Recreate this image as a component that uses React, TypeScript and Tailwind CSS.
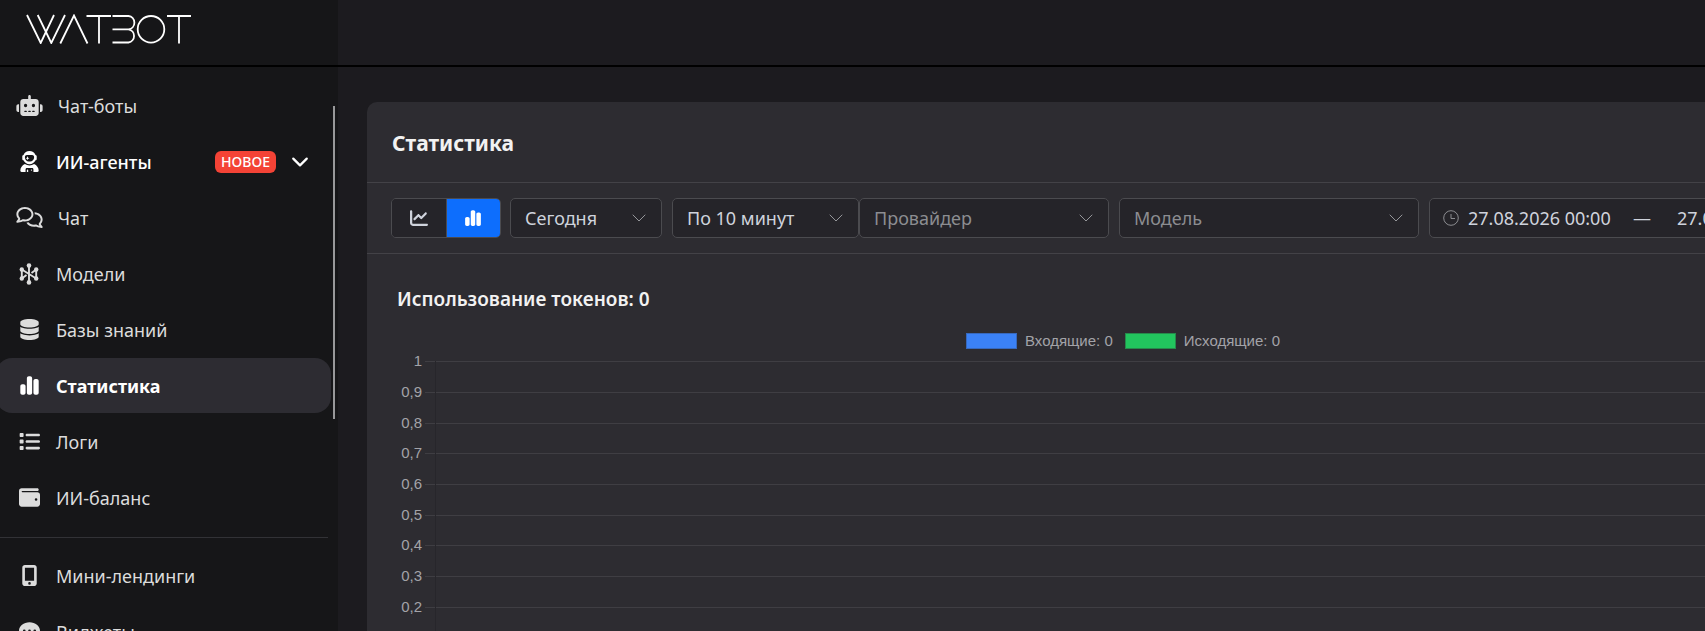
import { useState } from "react";
import type { ReactNode } from "react";
import {
    FaChartLine,
    FaChartSimple,
    FaCommentDots,
    FaDatabase,
    FaList,
    FaMobileScreenButton,
    FaRegComments,
    FaRobot,
    FaUserAstronaut,
    FaWallet,
} from "react-icons/fa6";

interface NavItem {
    id: string;
    label: string;
    icon: ReactNode;
    badge?: string;
}

const MAIN_NAV: NavItem[] = [
    { id: "bots", label: "Чат-боты", icon: <FaRobot className="-ml-px h-[21px] w-[27px]" /> },
    { id: "agents", label: "ИИ-агенты", icon: <FaUserAstronaut className="size-[21px]" />, badge: "НОВОЕ" },
    { id: "chat", label: "Чат", icon: <FaRegComments className="-ml-px h-[21px] w-[27px]" /> },
    { id: "models", label: "Модели", icon: <ModelsIcon /> },
    { id: "knowledge", label: "Базы знаний", icon: <FaDatabase className="size-[21px]" /> },
    { id: "stats", label: "Статистика", icon: <FaChartSimple className="size-[21px]" /> },
    { id: "logs", label: "Логи", icon: <FaList className="size-[21px]" /> },
    { id: "balance", label: "ИИ-баланс", icon: <FaWallet className="size-[21px]" /> },
];

const EXTRA_NAV: NavItem[] = [
    { id: "landings", label: "Мини-лендинги", icon: <FaMobileScreenButton className="size-[21px]" /> },
    { id: "widgets", label: "Виджеты", icon: <FaCommentDots className="size-[21px]" /> },
];

const TICKS = ["1", "0,9", "0,8", "0,7", "0,6", "0,5", "0,4", "0,3", "0,2", "0,1", "0"];

const LEGEND = [
    { label: "Входящие: 0", color: "bg-[#3b82f6] border-[#3769bd]" },
    { label: "Исходящие: 0", color: "bg-[#22c55e] border-[#268a4b]" },
];

function Logo() {
    return (
        <svg viewBox="0 0 166 30" className="h-[30px] w-[166px]" fill="none" stroke="#fff" strokeWidth="1.8" role="img" aria-label="WATBOT">
            <path d="M1 1 14.7 29 28 1M11.7 1 25.3 29 39 1" />
            <path d="M34.3 29.5 48 1.5 61.5 29.5" />
            <path d="M60.5 2H85M73 2V29.5" />
            <path d="M86.5 2H102.5A6.7 6.7 0 0 1 102.5 15.3H86.5M102.5 15.3A6.7 6.7 0 0 1 102.5 28.5H86.5" />
            <circle cx="125" cy="15.3" r="13.3" />
            <path d="M141 2H165M153 2V29.5" />
        </svg>
    );
}

function ModelsIcon() {
    return (
        <svg viewBox="0 0 20 22" className="h-[22px] w-5" fill="currentColor" stroke="currentColor">
            <path
                d="M10 2.5V19.5M2.8 6.5V15.5M17.2 6.5V15.5M2.8 6.5 17.2 15.5M7.5 12 2.8 15.5M17.2 6.5 12.5 10"
                fill="none"
                strokeWidth="1.9"
            />
            <g stroke="none">
                <circle cx="10" cy="2.6" r="2.3" />
                <circle cx="10" cy="19.4" r="2.3" />
                <circle cx="2.8" cy="6.5" r="2.2" />
                <circle cx="2.8" cy="15.5" r="2.2" />
                <circle cx="17.2" cy="6.5" r="2.2" />
                <circle cx="17.2" cy="15.5" r="2.2" />
            </g>
        </svg>
    );
}

function Chevron({ className }: { className: string }) {
    return (
        <svg viewBox="0 0 16 10" className={className} fill="none" stroke="currentColor" strokeLinecap="round" strokeLinejoin="round">
            <path d="m2 2 6 6 6-6" />
        </svg>
    );
}

function NavLink({ item, active, onSelect }: { item: NavItem; active: boolean; onSelect: (id: string) => void }) {
    const tone = active
        ? "bg-[#2d2c32] font-bold text-white"
        : item.badge
          ? "font-medium text-white"
          : "text-[#dcdcdc]";

    return (
        <li>
            <a
                href={`#${item.id}`}
                onClick={() => onSelect(item.id)}
                className={`-ml-1 mb-px flex h-[55px] items-center rounded-2xl pr-[22px] pl-[21px] ${tone}`}
            >
                <span className="mr-[15px] flex min-w-6 shrink-0 justify-center">{item.icon}</span>
                <span>{item.label}</span>
                {item.badge && (
                    <>
                        <span className="ml-auto rounded-md bg-[#f44336] px-[6px] text-sm leading-[22px] font-medium">
                            {item.badge}
                        </span>
                        <Chevron className="ml-[15px] h-3 w-[18px] stroke-2" />
                    </>
                )}
            </a>
        </li>
    );
}

function FilterSelect({ label, options, width, muted }: { label: string; options: string[]; width: string; muted?: boolean }) {
    return (
        <div className={`relative shrink-0 ${width}`}>
            <select
                aria-label={label}
                className={`h-10 w-full appearance-none rounded-[5px] border border-[#4b4b4f] bg-[#252429] pr-10 pl-[14px] outline-none ${muted ? "text-[#8c8d91]" : "text-[#cfd3dc]"}`}
            >
                {options.map((o) => (
                    <option key={o}>{o}</option>
                ))}
            </select>
            <Chevron className="pointer-events-none absolute top-[15px] right-[15px] h-[10px] w-4 text-[#95969a]" />
        </div>
    );
}

function DateRange() {
    return (
        <div className="flex h-10 w-[440px] shrink-0 items-center rounded-[5px] border border-[#4b4b4f] bg-[#252429] px-[13px] text-[#cfd3dc]">
            <svg viewBox="0 0 16 16" className="mr-[9px] size-4 shrink-0 text-[#8c8d91]" fill="none" stroke="currentColor">
                <circle cx="8" cy="8" r="7.3" />
                <path d="M8 4V8.5H12" />
            </svg>
            <input aria-label="Начало периода" defaultValue="27.08.2026 00:00" className="w-[156px] outline-none" />
            <span className="w-9 text-center">—</span>
            <input aria-label="Конец периода" defaultValue="27.08.2026 23:59" className="ml-[17px] w-[156px] outline-none" />
        </div>
    );
}

function TokenChart() {
    return (
        <svg className="block h-[340px] w-full" role="img" aria-label="Использование токенов">
            {TICKS.map((t, i) => {
                const y = Math.round(10.2 + i * 30.7) + 0.5;
                return (
                    <g key={t}>
                        <line x1="34" x2="100%" y1={y} y2={y} stroke="#3f3e43" />
                        <text x="31" y={y + 4.5} textAnchor="end" fill="#a3a3a8" className="font-['Liberation_Sans',sans-serif] text-[15px]">
                            {t}
                        </text>
                    </g>
                );
            })}
            <line x1="44.5" x2="44.5" y1="10" y2="318" stroke="#27262b" />
        </svg>
    );
}

export default function App() {
    const [active, setActive] = useState("stats");
    const [chartType, setChartType] = useState<"line" | "bar">("bar");

    const chartBtn = (type: "line" | "bar") =>
        `flex flex-1 items-center justify-center ${chartType === type ? "bg-[#0d6efd] text-white" : "bg-[#252429] text-[#cfd3dc]"}`;

    return (
        <div className="flex h-screen flex-col overflow-hidden bg-[#1c1b1f] font-['Noto_Sans',sans-serif] text-[18px] leading-6">
            {/* Top bar */}
            <header className="flex h-[67px] shrink-0 border-b-2 border-black">
                <a href="#home" className="w-[338px] shrink-0 bg-[#161618] pt-[14px] pl-[26px]">
                    <Logo />
                </a>
            </header>

            <div className="flex min-h-0 flex-1">
                {/* Sidebar */}
                <nav className="relative w-[338px] shrink-0 overflow-hidden bg-[#161618] pt-[11px] pr-[7px]">
                    <ul>
                        {MAIN_NAV.map((item) => (
                            <NavLink key={item.id} item={item} active={active === item.id} onSelect={setActive} />
                        ))}
                    </ul>
                    <hr className="mt-3 mr-[3px] mb-[10px] border-[#323236]" />
                    <ul>
                        {EXTRA_NAV.map((item) => (
                            <NavLink key={item.id} item={item} active={active === item.id} onSelect={setActive} />
                        ))}
                    </ul>
                    {/* Scroll thumb */}
                    <div className="absolute top-[39px] right-[3px] h-[313px] w-[2px] bg-[#98989a]" />
                </nav>

                <main className="min-w-0 flex-1 overflow-hidden pt-[35px] pl-[29px]">
                    <section className="min-w-[1512px] rounded-[10px] bg-[#2d2c31]">
                        <div className="flex h-[81px] items-center border-b border-[#434247] px-[25px] pt-[2px]">
                            <h1 className="text-[21px] font-bold text-[#f2f2f2]">Статистика</h1>
                        </div>

                        {/* Filters */}
                        <div className="flex items-center border-b border-[#434247] px-6 py-[15px]">
                            <div className="mr-[9px] flex h-10 w-[110px] shrink-0 divide-x divide-[#4b4b4f] overflow-hidden rounded-[5px] border border-[#4b4b4f]">
                                <button aria-label="Линейный график" onClick={() => setChartType("line")} className={chartBtn("line")}>
                                    <FaChartLine className="size-[18px]" />
                                </button>
                                <button aria-label="Столбчатый график" onClick={() => setChartType("bar")} className={chartBtn("bar")}>
                                    <FaChartSimple className="size-[18px]" />
                                </button>
                            </div>
                            <div className="mr-[10px] flex">
                                <FilterSelect label="Период" options={["Сегодня", "Вчера", "Неделя"]} width="w-[152px]" />
                            </div>
                            <FilterSelect label="Интервал" options={["По 10 минут", "По часам"]} width="w-[187px]" />
                            <div className="flex gap-[10px]">
                                <FilterSelect label="Провайдер" options={["Провайдер"]} width="w-[250px]" muted />
                                <FilterSelect label="Модель" options={["Модель"]} width="w-[300px]" muted />
                                <DateRange />
                            </div>
                        </div>

                        <div className="px-6 pt-[33px] pb-6">
                            <h2 className="pl-[6px] text-[19px] leading-6 font-semibold text-[#f2f2f2]">Использование токенов: 0</h2>
                            <div className="mt-5 flex h-5 items-center justify-center gap-3 font-['Liberation_Sans',sans-serif] text-[15px] text-[#a3a3a8]">
                                {LEGEND.map((l) => (
                                    <div key={l.label} className="flex items-center gap-2">
                                        <span className={`h-4 w-[51px] border ${l.color}`} />
                                        <span>{l.label}</span>
                                    </div>
                                ))}
                            </div>
                            <TokenChart />
                        </div>
                    </section>
                </main>
            </div>
        </div>
    );
}
